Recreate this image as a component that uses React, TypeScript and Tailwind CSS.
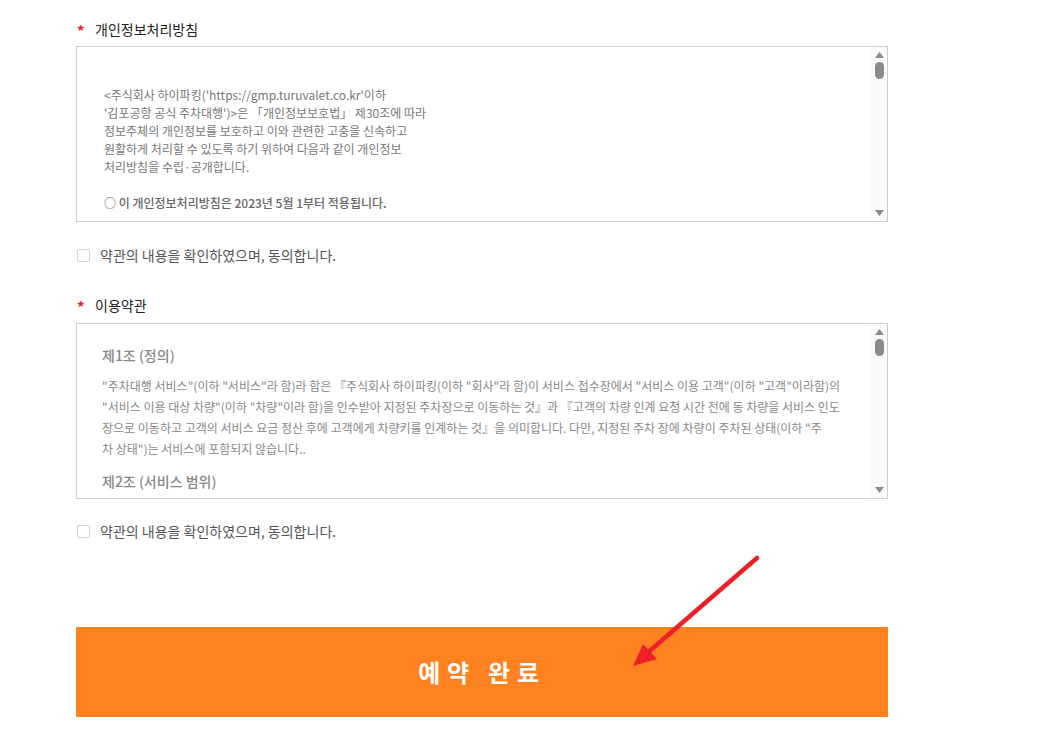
import React from 'react';

const font = { fontFamily: '"Noto Sans CJK KR", "Noto Sans", sans-serif' };

function Label({ text }: { text: string }) {
  return (
    <div className="flex h-[20px] items-center text-[14px] text-[#222]">
      <span className="relative top-[2px] w-[19px] pl-[1px] text-[15px] font-bold text-[#ed1c24]">*</span>
      <span>{text}</span>
    </div>
  );
}

function ScrollBar() {
  return (
    <div className="flex w-[16px] shrink-0 flex-col items-center bg-[#fafafa] pt-[5px] pb-[5px]">
      <svg width="9" height="6" viewBox="0 0 9 6">
        <path d="M4.5 0 L9 6 L0 6 Z" fill="#8a8a8a" />
      </svg>
      <div className="mt-[4px] h-[17px] w-[9px] rounded-full bg-[#8a8a8a]" />
      <div className="flex-1" />
      <svg width="9" height="6" viewBox="0 0 9 6">
        <path d="M0 0 L9 0 L4.5 6 Z" fill="#8a8a8a" />
      </svg>
    </div>
  );
}

function Agree() {
  return (
    <label className="flex h-[16px] items-center text-[14px] text-[#555]">
      <span className="ml-[1px] h-[13px] w-[13px] rounded-[2px] border border-[#d4d4d4] bg-white" />
      <span className="ml-[10px]">약관의 내용을 확인하였으며, 동의합니다.</span>
    </label>
  );
}

export default function App() {
  return (
    <div className="relative min-h-[742px] bg-white" style={font}>
      <div className="ml-[76px] w-[812px] pt-[19px]">
        <Label text="개인정보처리방침" />

        <div className="mt-[7px] flex h-[176px] border border-[#cccccc]">
          <div className="flex-1 overflow-hidden pl-[27px] pt-[39px] text-[12px] leading-[18px] text-[#777]">
            <p>
              &lt;주식회사 하이파킹('https://gmp.turuvalet.co.kr'이하
              <br />
              '김포공항 공식 주차대행')&gt;은 「개인정보보호법」 제30조에 따라
              <br />
              정보주체의 개인정보를 보호하고 이와 관련한 고충을 신속하고
              <br />
              원활하게 처리할 수 있도록 하기 위하여 다음과 같이 개인정보
              <br />
              처리방침을 수립·공개합니다.
            </p>
            <p className="mt-[18px] font-medium text-[#666]">○ 이 개인정보처리방침은 2023년 5월 1부터 적용됩니다.</p>
          </div>
          <ScrollBar />
        </div>

        <div className="mt-[25px]">
          <Agree />
        </div>

        <div className="mt-[32px]">
          <Label text="이용약관" />
        </div>

        <div className="mt-[8px] flex h-[176px] border border-[#cccccc]">
          <div className="flex-1 overflow-hidden pl-[25px] pt-[21px] text-[#888]">
            <h3 className="text-[14px] font-medium leading-[20px]">제1조 (정의)</h3>
            <p className="mt-[10px] text-[12px] leading-[21px]">
              "주차대행 서비스"(이하 "서비스"라 함)라 함은 『주식회사 하이파킹(이하 "회사"라 함)이 서비스 접수장에서 "서비스 이용 고객"(이하 "고객"이라함)의
              <br />
              "서비스 이용 대상 차량"(이하 "차량"이라 함)을 인수받아 지정된 주차장으로 이동하는 것』과 『고객의 차량 인계 요청 시간 전에 동 차량을 서비스 인도
              <br />
              장으로 이동하고 고객의 서비스 요금 정산 후에 고객에게 차량키를 인계하는 것』을 의미합니다. 다만, 지정된 주차 장에 차량이 주차된 상태(이하 "주
              <br />
              차 상태")는 서비스에 포함되지 않습니다..
            </p>
            <h3 className="mt-[12px] text-[14px] font-medium leading-[20px]">제2조 (서비스 범위)</h3>
          </div>
          <ScrollBar />
        </div>

        <div className="mt-[24px]">
          <Agree />
        </div>

        <button className="mt-[88px] flex h-[90px] w-full items-center justify-center bg-[#ff8221] text-[24px] font-bold tracking-[0.28em] text-white">
          예약 완료
        </button>
      </div>

      <svg className="pointer-events-none absolute left-0 top-0" width="1049" height="742" viewBox="0 0 1049 742">
        <line x1="757" y1="558" x2="645" y2="655" stroke="#ee2027" strokeWidth="4.5" strokeLinecap="round" />
        <path d="M633 666 L643 644 L657 659 Z" fill="#ee2027" />
      </svg>
    </div>
  );
}
